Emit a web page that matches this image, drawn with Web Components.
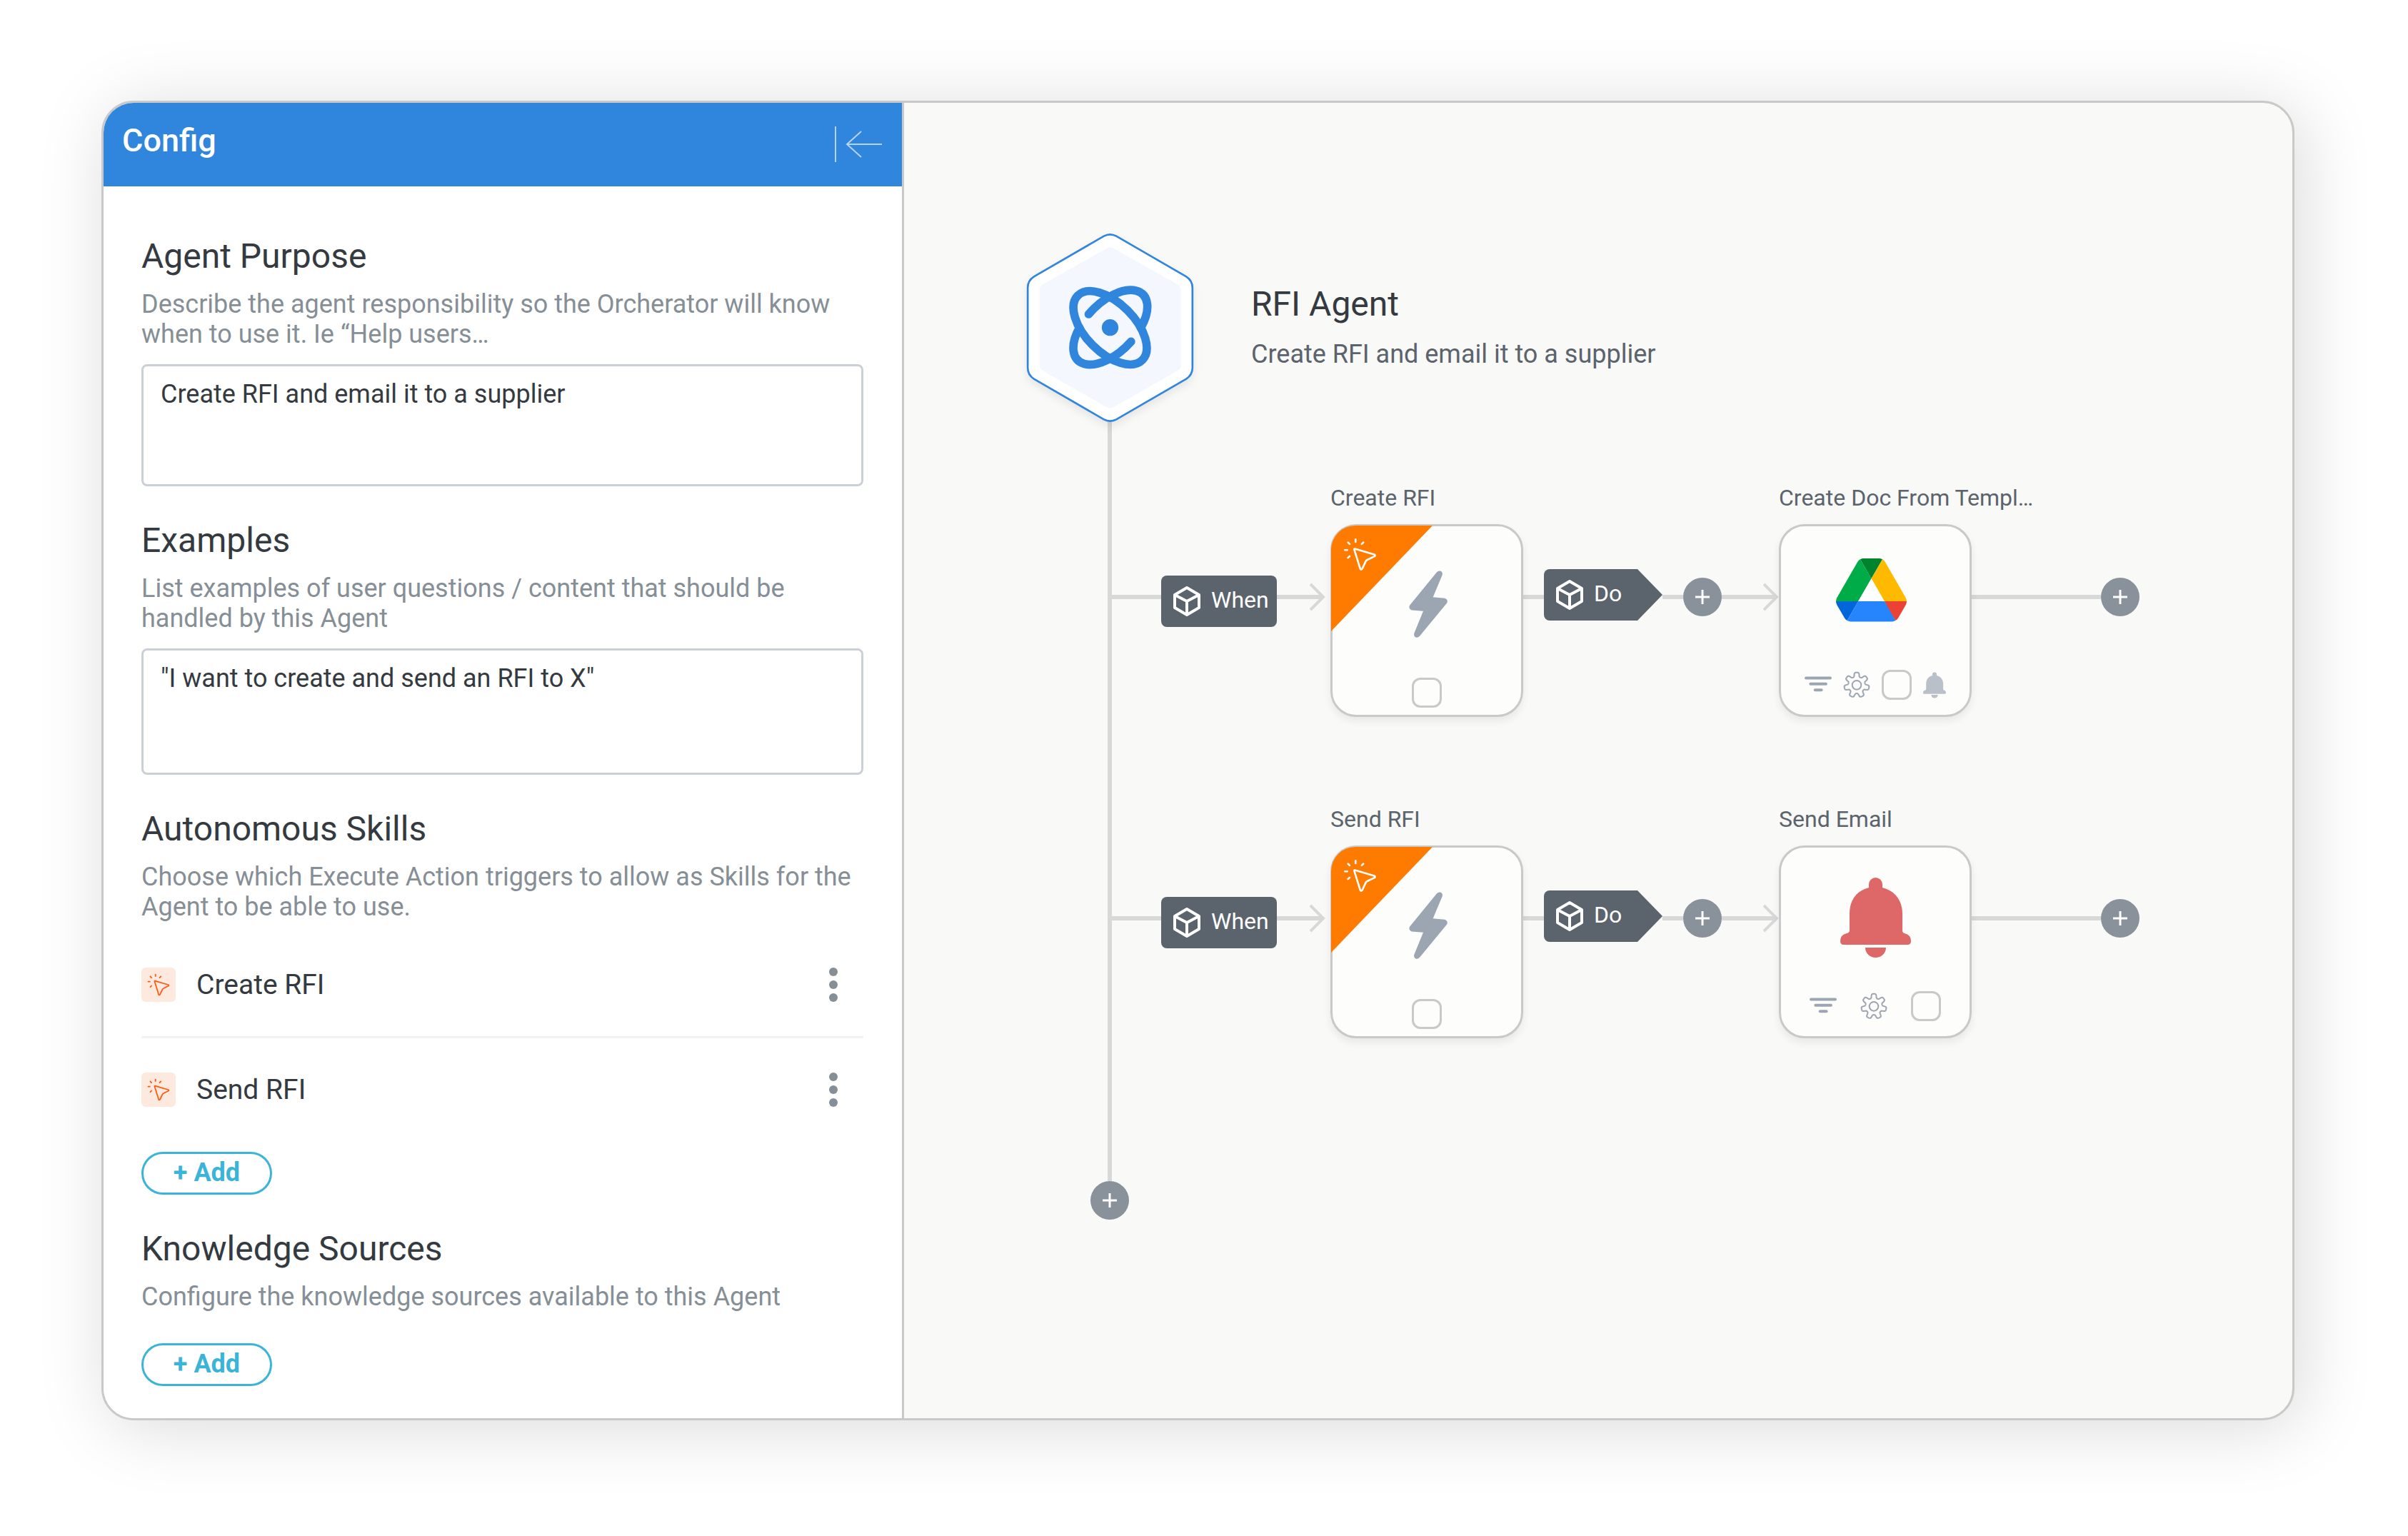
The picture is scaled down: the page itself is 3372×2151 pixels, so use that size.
<!DOCTYPE html>
<html lang="en">
<head>
<meta charset="utf-8">
<title>RFI Agent</title>
<style>
body {
    margin: 0;
    padding: 141px 159px 159px 142px;
    background: #fff;
    color: #343a40;
    font-family: Roboto, "Liberation Sans", sans-serif;
    font-size: 36px;
    line-height: 42px;
}
</style>
</head>
<body>

<agent-window>
    <config-panel slot="panel" heading="Config">
        <config-field heading="Agent Purpose"
            hint="Describe the agent responsibility so the Orcherator will know when to use it. Ie “Help users…"
            value="Create RFI and email it to a supplier"></config-field>
        <config-field heading="Examples" class="tall"
            hint="List examples of user questions / content that should be handled by this Agent"
            value='"I want to create and send an RFI to X"'></config-field>
        <config-list heading="Autonomous Skills"
            hint="Choose which Execute Action triggers to allow as Skills for the Agent to be able to use.">
            <skill-item>Create RFI</skill-item>
            <skill-item>Send RFI</skill-item>
        </config-list>
        <config-list class="empty" heading="Knowledge Sources"
            hint="Configure the knowledge sources available to this Agent"></config-list>
    </config-panel>

    <agent-flow>
        <agent-head slot="head" heading="RFI Agent">Create RFI and email it to a supplier</agent-head>
        <flow-lane>
            <flow-link class="start"></flow-link>
            <flow-badge class="when">When</flow-badge>
            <flow-link class="in" arrow></flow-link>
            <flow-card class="trigger" label="Create RFI" icon="bolt" tools="check"></flow-card>
            <flow-link></flow-link>
            <flow-badge class="do">Do</flow-badge>
            <flow-link></flow-link>
            <plus-button></plus-button>
            <flow-link class="next" arrow></flow-link>
            <flow-card label="Create Doc From Templ…" icon="drive" tools="filter gear check bell"></flow-card>
            <flow-link class="end"></flow-link>
            <plus-button></plus-button>
        </flow-lane>
        <flow-lane>
            <flow-link class="start"></flow-link>
            <flow-badge class="when">When</flow-badge>
            <flow-link class="in" arrow></flow-link>
            <flow-card class="trigger" label="Send RFI" icon="bolt" tools="check"></flow-card>
            <flow-link></flow-link>
            <flow-badge class="do">Do</flow-badge>
            <flow-link></flow-link>
            <plus-button></plus-button>
            <flow-link class="next" arrow></flow-link>
            <flow-card class="wide-tools" label="Send Email" icon="bell" tools="filter gear check"></flow-card>
            <flow-link class="end"></flow-link>
            <plus-button></plus-button>
        </flow-lane>
        <plus-button slot="foot"></plus-button>
    </agent-flow>
</agent-window>

<script>
// outline of the settings wheel: seven soft teeth round (cx, cy)
function gearPath(cx, cy){
    const points = []
    for(let i = 0; i < 210; i++){
        const t = i / 210 * Math.PI * 2
        const r = 44 + 9 * Math.tanh(2.2 * Math.cos(7 * t) + 0.2)
        points.push(`${(cx + r * Math.sin(t)).toFixed(1)} ${(cy - r * Math.cos(t)).toFixed(1)}`)
    }
    return "M" + points.join("L") + "Z"
}

const ICONS = {
    collapse: `<svg viewBox="0 0 68 52" width="68" height="52" fill="none" stroke="#b5d3f3" stroke-width="2">
        <path d="M2 0V50M67 25H18M38 7 18 25 38 43"/></svg>`,
    click: `<svg viewBox="93 71 142 142" fill="none" stroke="currentColor" stroke-width="8" stroke-linecap="round" stroke-linejoin="round">
        <path d="M145 78V89M113 91 120 98M100 123H110M113 156 120 149M171 98 178 91"/>
        <path d="M142 118 224 142Q231 146 225 150L196 164Q190 167 188 171L173 203Q168 209 165 203L140 123Q138 117 142 118Z"/></svg>`,
    cube: `<svg viewBox="0 0 40 44" width="40" height="44" fill="none" stroke="currentColor" stroke-width="4" stroke-linejoin="round">
        <path d="M20 3 37 13V31L20 41 3 31V13ZM3 13 20 22 37 13M20 22V41"/></svg>`,
    dots: `<svg viewBox="0 0 12 48" width="12" height="48" fill="#868e96">
        <circle cx="6" cy="6" r="6"/><circle cx="6" cy="24" r="6"/><circle cx="6" cy="42" r="6"/></svg>`,
    plus: `<svg viewBox="0 0 20 20" width="20" height="20" stroke="#fff" stroke-width="3"><path d="M10 0V20M0 10H20"/></svg>`,
    chevron: `<svg viewBox="0 0 22 40" width="22" height="40" fill="none" stroke="#d8d8d8" stroke-width="4"><path d="M1 2 19 20 1 38"/></svg>`,
    bolt: `<svg viewBox="358 193 174 299" width="58" height="100" fill="#9ca5b2">
        <path d="M487 217Q495 209 504 213 513 218 510 229L471 322 520 327Q535 332 530 346L415 486Q407 494 398 491 389 486 392 474L430 381 382 377Q367 371 373 357Z"/></svg>`,
    drive: `<svg viewBox="0 0 97 92.6" width="110" height="105">
        <path fill="#0066da" d="M6.6 66.85l3.85 6.65c.8 1.4 1.95 2.5 3.3 3.3L27.5 53H0c0 1.55.4 3.1 1.2 4.5z"/>
        <path fill="#00ac47" d="M43.65 25 29.9 1.2c-1.35.8-2.5 1.9-3.3 3.3l-25.4 44A9.06 9.06 0 0 0 0 53h27.5z"/>
        <path fill="#ea4335" d="M73.55 76.8c1.35-.8 2.5-1.9 3.3-3.3l1.6-2.75L86.1 57.5c.8-1.4 1.2-2.95 1.2-4.5H59.8l5.85 11.5z"/>
        <path fill="#00832d" d="M43.65 25 57.4 1.2C56.05.4 54.5 0 52.9 0H34.4c-1.6 0-3.15.45-4.5 1.2z"/>
        <path fill="#2684fc" d="M59.8 53H27.5L13.75 76.8c1.35.8 2.9 1.2 4.5 1.2h50.8c1.6 0 3.15-.45 4.5-1.2z"/>
        <path fill="#ffba00" d="M73.4 26.5 60.7 4.5c-.8-1.4-1.95-2.5-3.3-3.3L43.65 25 59.8 53h27.45c0-1.55-.4-3.1-1.2-4.5z"/>
        <path fill="#fff" d="M43.65 25 59.8 53H27.5z"/></svg>`,
    bell: `<svg viewBox="0 0 99 112" width="99" height="112" fill="currentColor">
        <path d="M40 14V9.5a9.5 9.5 0 0 1 19 0V14C76 18 87 32 87 50V74Q87 77 90 78 99 80 99 89 99 94 94 94H5Q0 94 0 89 0 80 9 78 13 77 13 74V50C13 32 23 18 40 14Z"/>
        <path d="M35 98H64A14.5 14 0 0 1 35 98Z"/></svg>`,
    filter: `<svg viewBox="135 632 113 113" width="38" height="38" fill="#9ca5b2">
        <rect x="135" y="654" width="113" height="12" rx="6"/><rect x="154" y="679" width="76" height="12" rx="6"/><rect x="173" y="704" width="38" height="12" rx="6"/></svg>`,
    gear: `<svg viewBox="297 631 114 114" width="38" height="38" fill="none" stroke="#9ca5b2" stroke-width="6" stroke-linejoin="round">
        <path d="${gearPath(354, 689)}"/><circle cx="354" cy="689" r="19"/></svg>`,
    agent: `<svg viewBox="20 18 704 795" width="235" height="265">
        <path fill="#fff" stroke="#3085dd" stroke-width="8" d="M346 32Q372 18 398 32L692 202Q718 219 718 248V586Q718 615 692 632L398 802Q372 816 346 802L52 632Q26 615 26 586V248Q26 219 52 202Z"/>
        <path fill="#f4f8fe" d="M360 82Q372 76 384 82L656 235Q670 243 670 260V574Q670 590 656 598L384 752Q372 758 360 752L89 598Q75 590 75 574V260Q75 243 89 235Z"/>
        <g fill="none" stroke="#3085dd" stroke-width="35" stroke-linecap="round">
            <ellipse cx="372" cy="417" rx="191.5" ry="103.7" transform="rotate(45 372 417)"/>
            <path d="M282 360A191.5 103.7 -45 0 1 501 417M460 475A191.5 103.7 -45 0 1 243 417"/>
        </g>
        <circle cx="372" cy="416" r="35" fill="#3085dd"/></svg>`
}

const BASE = `
* { box-sizing: border-box; }
h1, h2, p { margin: 0; font-weight: 400; }
h2 { font-size: 48px; line-height: 56px; }
svg { display: block; flex: none; }
button {
    margin: 0;
    padding: 0;
    border: 0;
    background: none;
    color: inherit;
    font: inherit;
    cursor: pointer;
}
`

const SECTION = `
:host { display: block; }
.hint { margin-top: 18px; color: #868e96; }
`

class BaseElement extends HTMLElement {

    constructor(){
        super();
        this.attachShadow({mode: "open"});
    }

    connectedCallback(){
        this.shadowRoot.innerHTML = `<style>${BASE}</style>` + this.render()
    }

    text(name){
        const span = document.createElement("span")
        span.textContent = this.getAttribute(name) || ""
        return span.innerHTML
    }

}

customElements.define("agent-window", class extends BaseElement {
    render(){
        return `<style>
:host {
    display: flex;
    overflow: hidden;
    border: 3px solid #c9c9c9;
    border-radius: 45px;
    background: #f9f9f7;
    box-shadow: 10px 10px 100px rgba(0, 0, 0, .15);
}
::slotted(config-panel) { flex: none; }
main { flex: 1; min-width: 0; }
</style>
<slot name="panel"></slot>
<main><slot></slot></main>`
    }
})

customElements.define("config-panel", class extends BaseElement {
    render(){
        return `<style>
:host {
    display: block;
    box-sizing: border-box;
    width: 1121px;
    border-right: 3px solid #c9c9c9;
    background: #fff;
}
header {
    display: flex;
    align-items: center;
    justify-content: space-between;
    height: 117px;
    padding: 0 27px 0 26px;
    background: #3085dd;
    color: #fff;
}
h1 { margin-bottom: 12px; font-size: 45px; line-height: 52px; font-weight: 500; }
.body {
    display: flex;
    flex-direction: column;
    gap: 48px;
    padding: 70px 54px 45px 53px;
}
</style>
<header>
    <h1>${this.text("heading")}</h1>
    <button aria-label="Collapse">${ICONS.collapse}</button>
</header>
<div class="body"><slot></slot></div>`
    }
})

customElements.define("config-field", class extends BaseElement {
    render(){
        return `<style>
${SECTION}
textarea {
    display: block;
    width: 100%;
    height: 171px;
    margin-top: 21px;
    padding: 18px 24px;
    border: 3px solid #cbd0d8;
    border-radius: 8px;
    background: #fff;
    color: inherit;
    font: inherit;
    resize: none;
}
:host(.tall) textarea { height: 177px; }
</style>
<h2><label for="field">${this.text("heading")}</label></h2>
<p class="hint" id="hint">${this.text("hint")}</p>
<textarea id="field" aria-describedby="hint">${this.text("value")}</textarea>`
    }
})

customElements.define("config-list", class extends BaseElement {
    render(){
        return `<style>
${SECTION}
.items { margin: 16px 0 15px; }
:host(.empty) .items { margin: 0 0 44px; }
.add {
    display: block;
    width: 183px;
    height: 60px;
    padding-bottom: 3px;
    border: 3px solid #3bb4d8;
    border-radius: 30px;
    color: #3bb4d8;
    font-weight: 700;
}
</style>
<h2>${this.text("heading")}</h2>
<p class="hint">${this.text("hint")}</p>
<div class="items"><slot></slot></div>
<button class="add">+ Add</button>`
    }
})

customElements.define("skill-item", class extends BaseElement {
    render(){
        return `<style>
:host {
    display: flex;
    align-items: center;
    padding: 48px 36px 48px 0;
    font-size: 39px;
    line-height: 48px;
}
:host(:not(:last-child)) { border-bottom: 3px solid #f1f3f7; }
.icon {
    padding: 8px;
    border-radius: 6px;
    background: #fde9dd;
    color: #ff5a13;
}
.icon svg { width: 32px; height: 32px; }
.name { flex: 1; padding-left: 29px; }
</style>
<span class="icon">${ICONS.click}</span>
<span class="name"><slot></slot></span>
<button aria-label="More">${ICONS.dots}</button>`
    }
})

customElements.define("agent-flow", class extends BaseElement {
    render(){
        return `<style>
:host { display: block; padding: 182px 0 0 171px; }
.rail {
    display: flex;
    flex-direction: column;
    gap: 124px;
    margin-left: 114px;
    padding: 87px 0 200px;
    border-left: 6px solid #d8d8d8;
}
.foot { padding-left: 90px; }
</style>
<slot name="head"></slot>
<div class="rail"><slot></slot></div>
<div class="foot"><slot name="foot"></slot></div>`
    }
})

customElements.define("agent-head", class extends BaseElement {
    render(){
        return `<style>
:host { display: flex; align-items: center; gap: 80px; }
svg { filter: drop-shadow(0 6px 6px rgba(0, 0, 0, .08)); }
p { margin: 21px 0 2px; color: #5b636c; }
</style>
${ICONS.agent}
<div>
    <h2>${this.text("heading")}</h2>
    <p><slot></slot></p>
</div>`
    }
})

// Links, badges and buttons hang on the line, which runs 102px below a card's top edge.
customElements.define("flow-lane", class extends BaseElement {
    render(){
        return `<style>
:host { display: flex; align-items: center; }
::slotted(*) { flex: none; }
::slotted(:not(flow-card)) { margin: 56px 0 66px; }
::slotted(flow-badge.when) { margin-bottom: 54px; }
::slotted(flow-badge.do) { margin-bottom: 72px; }
</style>
<slot></slot>`
    }
})

customElements.define("flow-link", class extends BaseElement {
    render(){
        return `<style>
:host { display: flex; align-items: center; width: 29px; height: 6px; }
:host(.start) { width: 69px; }
:host(.in) { width: 68px; padding-right: 7px; }
:host(.next) { width: 80px; }
:host(.end) { width: 181px; }
.line { flex: 1; height: 6px; background: #d8d8d8; }
:host([arrow]) .line { margin-right: 4px; }
svg { margin-left: -22px; }
</style>
<div class="line"></div>
${this.hasAttribute("arrow") ? ICONS.chevron : ""}`
    }
})

customElements.define("flow-badge", class extends BaseElement {
    render(){
        return `<style>
:host {
    display: flex;
    align-items: center;
    gap: 14px;
    box-sizing: border-box;
    width: 162px;
    height: 72px;
    padding-left: 16px;
    border-radius: 8px;
    background: #5b636c;
    color: #fff;
    font-size: 32px;
    line-height: 38px;
}
:host(.do) {
    width: 166px;
    clip-path: polygon(0 0, 131px 0, 100% 50%, 131px 100%, 0 100%);
}
span { padding-bottom: 4px; }
</style>
${ICONS.cube}
<span><slot></slot></span>`
    }
})

customElements.define("plus-button", class extends BaseElement {
    render(){
        return `<style>
:host { display: block; width: 54px; height: 54px; }
button {
    display: grid;
    place-items: center;
    width: 54px;
    height: 54px;
    border-radius: 50%;
    background: #89919b;
}
</style>
<button aria-label="Add step">${ICONS.plus}</button>`
    }
})

customElements.define("flow-card", class extends BaseElement {

    tool(name){
        if(name == "check"){
            return `<input type="checkbox" aria-label="Select">`
        }
        return `<button class="${name}" aria-label="${name}">${ICONS[name]}</button>`
    }

    render(){
        const tools = this.getAttribute("tools").split(" ")

        return `<style>
:host { display: block; width: 270px; }
.label {
    height: 56px;
    color: #5b636c;
    font-size: 32px;
    line-height: 38px;
    white-space: nowrap;
}
.card {
    position: relative;
    display: flex;
    flex-direction: column;
    height: 270px;
    padding-bottom: 21px;
    border: 3px solid #c9c9c9;
    border-radius: 36px;
    background: #fdfdfb;
    box-shadow: 0 6px 12px rgba(0, 0, 0, .07);
}
.icon { flex: 1; display: grid; place-items: center; padding-bottom: 6px; color: #de6867; }
:host(.trigger) .card { padding-bottom: 10px; }
:host(.trigger) .icon { padding-bottom: 0; }
.tools { display: flex; align-items: center; justify-content: center; gap: 16px; }
:host(.wide-tools) .tools { gap: 33px; }
.tools .bell { color: #b9c0c9; }
.tools .bell svg { width: 32px; height: 37px; }
input {
    appearance: none;
    width: 42px;
    height: 42px;
    margin: 0;
    border: 3px solid #c9c9c9;
    border-radius: 12px;
}
.corner {
    position: absolute;
    top: -1px;
    left: -2px;
    width: 142px;
    height: 148px;
    padding: 17px;
    border-top-left-radius: 34px;
    background: #ff7b00;
    color: #fff;
    clip-path: polygon(0 0, 100% 0, 0 100%);
}
.corner svg { width: 47px; height: 47px; }
</style>
<div class="label">${this.text("label")}</div>
<div class="card">
    ${this.classList.contains("trigger") ? `<div class="corner">${ICONS.click}</div>` : ""}
    <div class="icon">${ICONS[this.getAttribute("icon")]}</div>
    <div class="tools">${tools.map(name => this.tool(name)).join("")}</div>
</div>`
    }

})
</script>
</body>
</html>
